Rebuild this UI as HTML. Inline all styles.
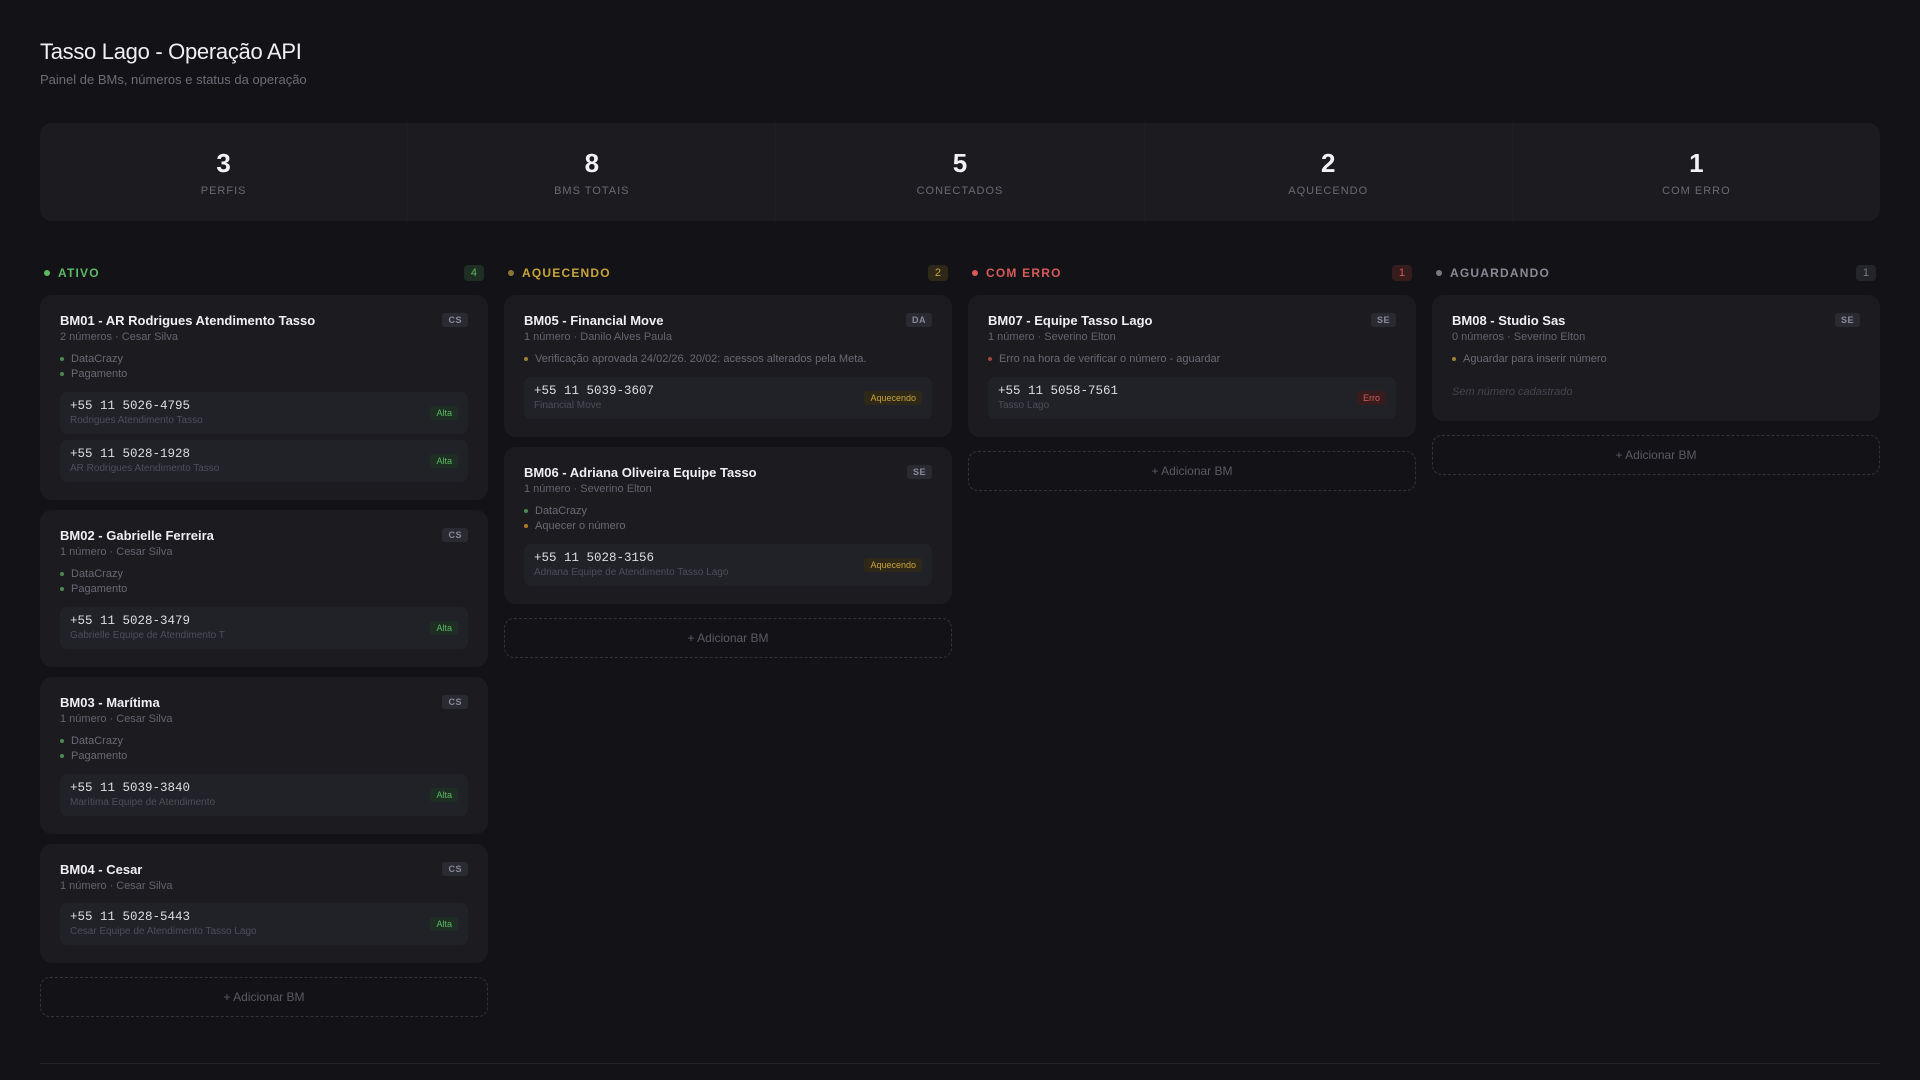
<!DOCTYPE html>
<html><head><meta charset="utf-8"><style>
*{box-sizing:border-box;margin:0;padding:0}
body{width:1920px;height:1080px;background:#131317;font-family:"Liberation Sans",sans-serif;color:#e8e8ec;position:relative;overflow:hidden}
h1{position:absolute;left:40px;top:39px;font-size:22px;font-weight:400;color:#f0f0f2;letter-spacing:-0.3px}
.subt{position:absolute;left:40px;top:72px;font-size:13px;color:#6c6c76}
.stats{position:absolute;left:40px;top:123px;width:1840px;height:98px;background:#1b1b20;border-radius:12px;display:flex}
.stat{flex:1;text-align:center;border-right:1px solid #1e1e23}
.stat:last-child{border-right:none}
.stat b{display:block;font-size:26px;font-weight:700;color:#f2f2f4;margin-top:25px;line-height:30px}
.stat span{display:block;font-size:11px;color:#6a6a74;letter-spacing:1px;margin-top:7px}
.col{position:absolute;top:264px;width:448px}
.ch{height:18px;display:flex;align-items:center;padding:0 4px 0 4px;margin-bottom:13px}
.ch .d{width:6px;height:6px;border-radius:50%;margin-right:8px}
.ch .l{font-size:12px;font-weight:700;letter-spacing:1.2px;flex:1}
.ch .c{font-size:11px;padding:1px 7px;border-radius:4px;line-height:14px}
.card{background:#1b1b20;border-radius:12px;padding:18px 20px 18px;margin-bottom:10px;position:relative}
.t{font-size:13px;font-weight:700;color:#f0f0f2;line-height:16px}
.s{font-size:11px;color:#64646e;line-height:14px;margin-top:1px}
.tag{position:absolute;right:20px;top:18px;font-size:9px;font-weight:700;color:#8a8a96;background:#2a2a32;border-radius:3px;padding:2px 6px;letter-spacing:.5px}
.bl{margin-top:8px}
.bl div{font-size:11px;color:#6a6a74;line-height:15px;position:relative;padding-left:11px}
.bl div:before{content:"";position:absolute;left:0;top:5px;width:4px;height:4px;border-radius:50%;background:var(--c)}
.num{background:#212128;border-radius:7px;padding:7px 10px;margin-top:10px;position:relative;height:42px}
.num+.num{margin-top:6px}
.p{font-family:"Liberation Mono",monospace;font-size:12.5px;color:#dcdce2;line-height:15px}
.n{font-size:10px;color:#4e4e58;line-height:13px}
.b{position:absolute;right:10px;top:14px;font-size:9px;padding:2px 6px;border-radius:3px;line-height:10px}
.alta{background:#1f2e22;color:#5cb865}
.aq{background:#2e2818;color:#c9a43a}
.er{background:#361c1c;color:#d85a5a}
.add{border:1px dashed #33333b;border-radius:10px;height:40px;text-align:center;line-height:38px;font-size:12px;color:#5a5a64;margin-top:14px}
.empty{font-size:11px;font-style:italic;color:#45454e;margin-top:18px;line-height:14px;margin-bottom:4px}
.line{position:absolute;left:40px;top:1063px;width:1840px;height:1px;background:#25252b}
</style></head><body>
<h1>Tasso Lago - Operação API</h1>
<div class="subt">Painel de BMs, números e status da operação</div>
<div class="stats">
<div class="stat"><b>3</b><span>PERFIS</span></div>
<div class="stat"><b>8</b><span>BMS TOTAIS</span></div>
<div class="stat"><b>5</b><span>CONECTADOS</span></div>
<div class="stat"><b>2</b><span>AQUECENDO</span></div>
<div class="stat"><b>1</b><span>COM ERRO</span></div>
</div>

<div class="col" style="left:40px">
<div class="ch"><div class="d" style="background:#5cb865"></div><div class="l" style="color:#5cb865">ATIVO</div><div class="c" style="background:#1f2e22;color:#5cb865">4</div></div>
<div class="card"><div class="t">BM01 - AR Rodrigues Atendimento Tasso</div><div class="s">2 números · Cesar Silva</div><div class="tag">CS</div>
<div class="bl" style="--c:#4a8a50"><div>DataCrazy</div><div>Pagamento</div></div>
<div class="num"><div class="p">+55 11 5026-4795</div><div class="n">Rodrigues Atendimento Tasso</div><div class="b alta">Alta</div></div>
<div class="num"><div class="p">+55 11 5028-1928</div><div class="n">AR Rodrigues Atendimento Tasso</div><div class="b alta">Alta</div></div></div>
<div class="card"><div class="t">BM02 - Gabrielle Ferreira</div><div class="s">1 número · Cesar Silva</div><div class="tag">CS</div>
<div class="bl" style="--c:#4a8a50"><div>DataCrazy</div><div>Pagamento</div></div>
<div class="num"><div class="p">+55 11 5028-3479</div><div class="n">Gabrielle Equipe de Atendimento T</div><div class="b alta">Alta</div></div></div>
<div class="card"><div class="t">BM03 - Marítima</div><div class="s">1 número · Cesar Silva</div><div class="tag">CS</div>
<div class="bl" style="--c:#4a8a50"><div>DataCrazy</div><div>Pagamento</div></div>
<div class="num"><div class="p">+55 11 5039-3840</div><div class="n">Marítima Equipe de Atendimento</div><div class="b alta">Alta</div></div></div>
<div class="card"><div class="t">BM04 - Cesar</div><div class="s">1 número · Cesar Silva</div><div class="tag">CS</div>
<div class="num"><div class="p">+55 11 5028-5443</div><div class="n">Cesar Equipe de Atendimento Tasso Lago</div><div class="b alta">Alta</div></div></div>
<div class="add">+ Adicionar BM</div>
</div>

<div class="col" style="left:504px">
<div class="ch"><div class="d" style="background:#8a7634"></div><div class="l" style="color:#c9a43a">AQUECENDO</div><div class="c" style="background:#2e2818;color:#c9a43a">2</div></div>
<div class="card"><div class="t">BM05 - Financial Move</div><div class="s">1 número · Danilo Alves Paula</div><div class="tag">DA</div>
<div class="bl" style="--c:#9a8434"><div>Verificação aprovada 24/02/26. 20/02: acessos alterados pela Meta.</div></div>
<div class="num"><div class="p">+55 11 5039-3607</div><div class="n">Financial Move</div><div class="b aq">Aquecendo</div></div></div>
<div class="card"><div class="t">BM06 - Adriana Oliveira Equipe Tasso</div><div class="s">1 número · Severino Elton</div><div class="tag">SE</div>
<div class="bl" style="--c:#4a8a50"><div>DataCrazy</div><div style="--c:#b07a2a">Aquecer o número</div></div>
<div class="num"><div class="p">+55 11 5028-3156</div><div class="n">Adriana Equipe de Atendimento Tasso Lago</div><div class="b aq">Aquecendo</div></div></div>
<div class="add">+ Adicionar BM</div>
</div>

<div class="col" style="left:968px">
<div class="ch"><div class="d" style="background:#d85a5a"></div><div class="l" style="color:#d85a5a">COM ERRO</div><div class="c" style="background:#361c1c;color:#d85a5a">1</div></div>
<div class="card"><div class="t">BM07 - Equipe Tasso Lago</div><div class="s">1 número · Severino Elton</div><div class="tag">SE</div>
<div class="bl" style="--c:#a04444"><div>Erro na hora de verificar o número - aguardar</div></div>
<div class="num"><div class="p">+55 11 5058-7561</div><div class="n">Tasso Lago</div><div class="b er">Erro</div></div></div>
<div class="add">+ Adicionar BM</div>
</div>

<div class="col" style="left:1432px">
<div class="ch"><div class="d" style="background:#7a7a84"></div><div class="l" style="color:#8a8a96">AGUARDANDO</div><div class="c" style="background:#24242b;color:#7a7a84">1</div></div>
<div class="card"><div class="t">BM08 - Studio Sas</div><div class="s">0 números · Severino Elton</div><div class="tag">SE</div>
<div class="bl" style="--c:#9a8434"><div>Aguardar para inserir número</div></div>
<div class="empty">Sem número cadastrado</div></div>
<div class="add">+ Adicionar BM</div>
</div>
<div class="line"></div>
</body></html>
